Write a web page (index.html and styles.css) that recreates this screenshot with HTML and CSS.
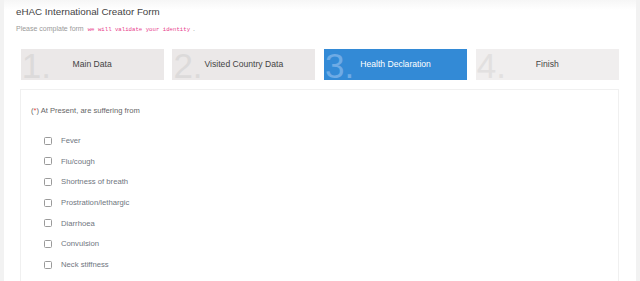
FILE: index.html
```html
<!DOCTYPE html>
<html lang="en">
<head>
<meta charset="utf-8">
<title>eHAC International Creator Form</title>
<link rel="stylesheet" href="styles.css">
</head>
<body>
<div class="page">
  <h1 class="title">eHAC International Creator Form</h1>
  <p class="subtitle">Please complate form <code class="code">we will validate your identity</code> .</p>
  <div class="steps">
    <div class="step"><span class="num">1.</span><span class="label">Main Data</span></div>
    <div class="step"><span class="num">2.</span><span class="label">Visited Country Data</span></div>
    <div class="step active"><span class="num">3.</span><span class="label">Health Declaration</span></div>
    <div class="step light"><span class="num">4.</span><span class="label">Finish</span></div>
  </div>
  <div class="card">
    <p class="question">(<span class="req">*</span>) At Present, are suffering from</p>
    <ul class="options">
      <li><label class="opt"><input type="checkbox" class="box"><span>Fever</span></label></li>
      <li><label class="opt"><input type="checkbox" class="box"><span>Flu/cough</span></label></li>
      <li><label class="opt"><input type="checkbox" class="box"><span>Shortness of breath</span></label></li>
      <li><label class="opt"><input type="checkbox" class="box"><span>Prostration/lethargic</span></label></li>
      <li><label class="opt"><input type="checkbox" class="box"><span>Diarrhoea</span></label></li>
      <li><label class="opt"><input type="checkbox" class="box"><span>Convulsion</span></label></li>
      <li><label class="opt"><input type="checkbox" class="box"><span>Neck stiffness</span></label></li>
    </ul>
  </div>
</div>
</body>
</html>
```
FILE: styles.css
```css
html, body {
  margin: 0;
  padding: 0;
  background: #f2f2f2;
  font-family: "Liberation Sans", Arial, sans-serif;
  overflow: hidden;
}
.page {
  margin: 0 4px;
  height: 281px;
  background: linear-gradient(#f6f6f6 0, #ffffff 10px);
  padding: 6px 12px 0 12px;
  box-sizing: border-box;
}
.title {
  margin: 0;
  font-size: 9.8px;
  line-height: 12px;
  font-weight: normal;
  color: #444;
}
.subtitle {
  margin: 6px 0 0 0;
  font-size: 7px;
  line-height: 10px;
  color: #9a9a9a;
}
.code {
  font-family: "Liberation Mono", monospace;
  font-size: 5.7px;
  color: #e83e8c;
  margin-left: 2px;
  margin-right: 1px;
}
.steps {
  display: grid;
  grid-template-columns: repeat(4, 143px);
  column-gap: 8.7px;
  margin: 13.5px 0 0 4.7px;
}
.step {
  position: relative;
  height: 31px;
  overflow: hidden;
  background: #ebe8e8;
  display: flex;
  align-items: center;
  justify-content: center;
}
.step.light {
  background: #f0eeee;
}
.step.active {
  background: #338ad6;
}
.num {
  position: absolute;
  left: 1px;
  top: 2px;
  font-size: 35px;
  line-height: 29px;
  color: #dcdada;
}
.step.light .num {
  color: #e2e0e0;
}
.step.active .num {
  color: #6eabe5;
}
.label {
  position: relative;
  font-size: 8.6px;
  color: #444;
}
.step.active .label {
  color: #ffffff;
}
.card {
  margin: 9px 5px 0 4px;
  border: 1px solid #f0f0f0;
  border-bottom: none;
  height: 200px;
  padding: 0 10px;
}
.question {
  margin: 16px 0 0 0;
  font-size: 7.6px;
  line-height: 10px;
  color: #666;
}
.req {
  color: #e84a4a;
}
.options {
  list-style: none;
  margin: 20px 0 0 0;
  padding: 0 0 0 13px;
  display: flex;
  flex-direction: column;
  gap: 10.7px;
}
.opt {
  display: flex;
  align-items: center;
  gap: 9px;
  height: 10px;
  font-size: 7.7px;
  color: #6f7680;
}
.box {
  -webkit-appearance: none;
  appearance: none;
  margin: 0;
  width: 8px;
  height: 8px;
  border: 1px solid #9a9a9a;
  border-radius: 1.5px;
  background: #fff;
  box-sizing: border-box;
}
```
